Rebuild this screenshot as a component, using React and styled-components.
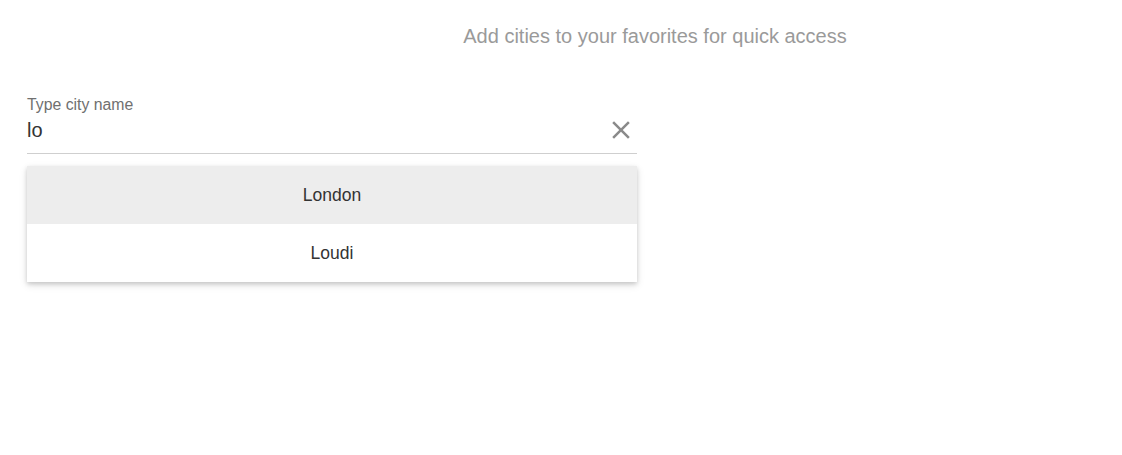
import React, { useState } from 'react';
import styled, { createGlobalStyle } from 'styled-components';

const GlobalStyle = createGlobalStyle`
  body {
    margin: 0;
    background: #fff;
    font-family: "Liberation Sans", Arial, sans-serif;
  }
`;

const Page = styled.div`
  display: flex;
  flex-direction: column;
  min-height: 100vh;
  box-sizing: border-box;
  padding: 24px 27px;
`;

const Subtitle = styled.p`
  margin: 0;
  padding-left: 188px;
  text-align: center;
  font-size: 20px;
  line-height: 25px;
  color: #9a9a9a;
`;

const SearchBox = styled.div`
  position: relative;
  width: 610px;
  margin-top: 47px;
`;

const Field = styled.div`
  display: flex;
  flex-direction: column;
  border-bottom: 1px solid #cfcfcf;
  padding-bottom: 8px;
`;

const Label = styled.label`
  font-size: 15.8px;
  line-height: 18px;
  color: #707070;
`;

const InputRow = styled.div`
  display: flex;
  align-items: center;
  height: 30px;
  padding-top: 1px;
`;

const Input = styled.input`
  flex: 1;
  border: none;
  outline: none;
  padding: 0;
  background: transparent;
  font-family: inherit;
  font-size: 20px;
  color: #333;
`;

const ClearButton = styled.button`
  display: flex;
  align-items: center;
  justify-content: center;
  width: 30px;
  height: 30px;
  padding: 0;
  margin-right: 1px;
  border: none;
  background: transparent;
  color: #8a8a8a;
  cursor: pointer;
`;

const Menu = styled.ul`
  position: absolute;
  top: calc(100% + 12px);
  left: 0;
  right: 0;
  margin: 0;
  padding: 0;
  list-style: none;
  background: #fff;
  box-shadow: 0 2px 4px rgba(0, 0, 0, 0.14), 0 3px 8px rgba(0, 0, 0, 0.12);
`;

const Option = styled.li`
  display: flex;
  align-items: center;
  justify-content: center;
  height: 58px;
  font-size: 17.5px;
  color: #333;
  background: ${(p) => (p.$active ? '#ededed' : '#fff')};
  cursor: pointer;
`;

const CloseIcon = () => (
  <svg width="30" height="30" viewBox="0 0 24 24" fill="currentColor">
    <path d="M19 6.41 17.59 5 12 10.59 6.41 5 5 6.41 10.59 12 5 17.59 6.41 19 12 13.41 17.59 19 19 17.59 13.41 12z" />
  </svg>
);

export default function App() {
  const [query, setQuery] = useState('lo');
  const cities = ['London', 'Loudi'];

  return (
    <Page>
      <GlobalStyle />
      <Subtitle>Add cities to your favorites for quick access</Subtitle>
      <SearchBox>
        <Field>
          <Label htmlFor="city">Type city name</Label>
          <InputRow>
            <Input id="city" value={query} onChange={(e) => setQuery(e.target.value)} />
            <ClearButton aria-label="Clear" onClick={() => setQuery('')}>
              <CloseIcon />
            </ClearButton>
          </InputRow>
        </Field>
        <Menu>
          {cities.map((c, i) => (
            <Option key={c} $active={i === 0}>{c}</Option>
          ))}
        </Menu>
      </SearchBox>
    </Page>
  );
}
